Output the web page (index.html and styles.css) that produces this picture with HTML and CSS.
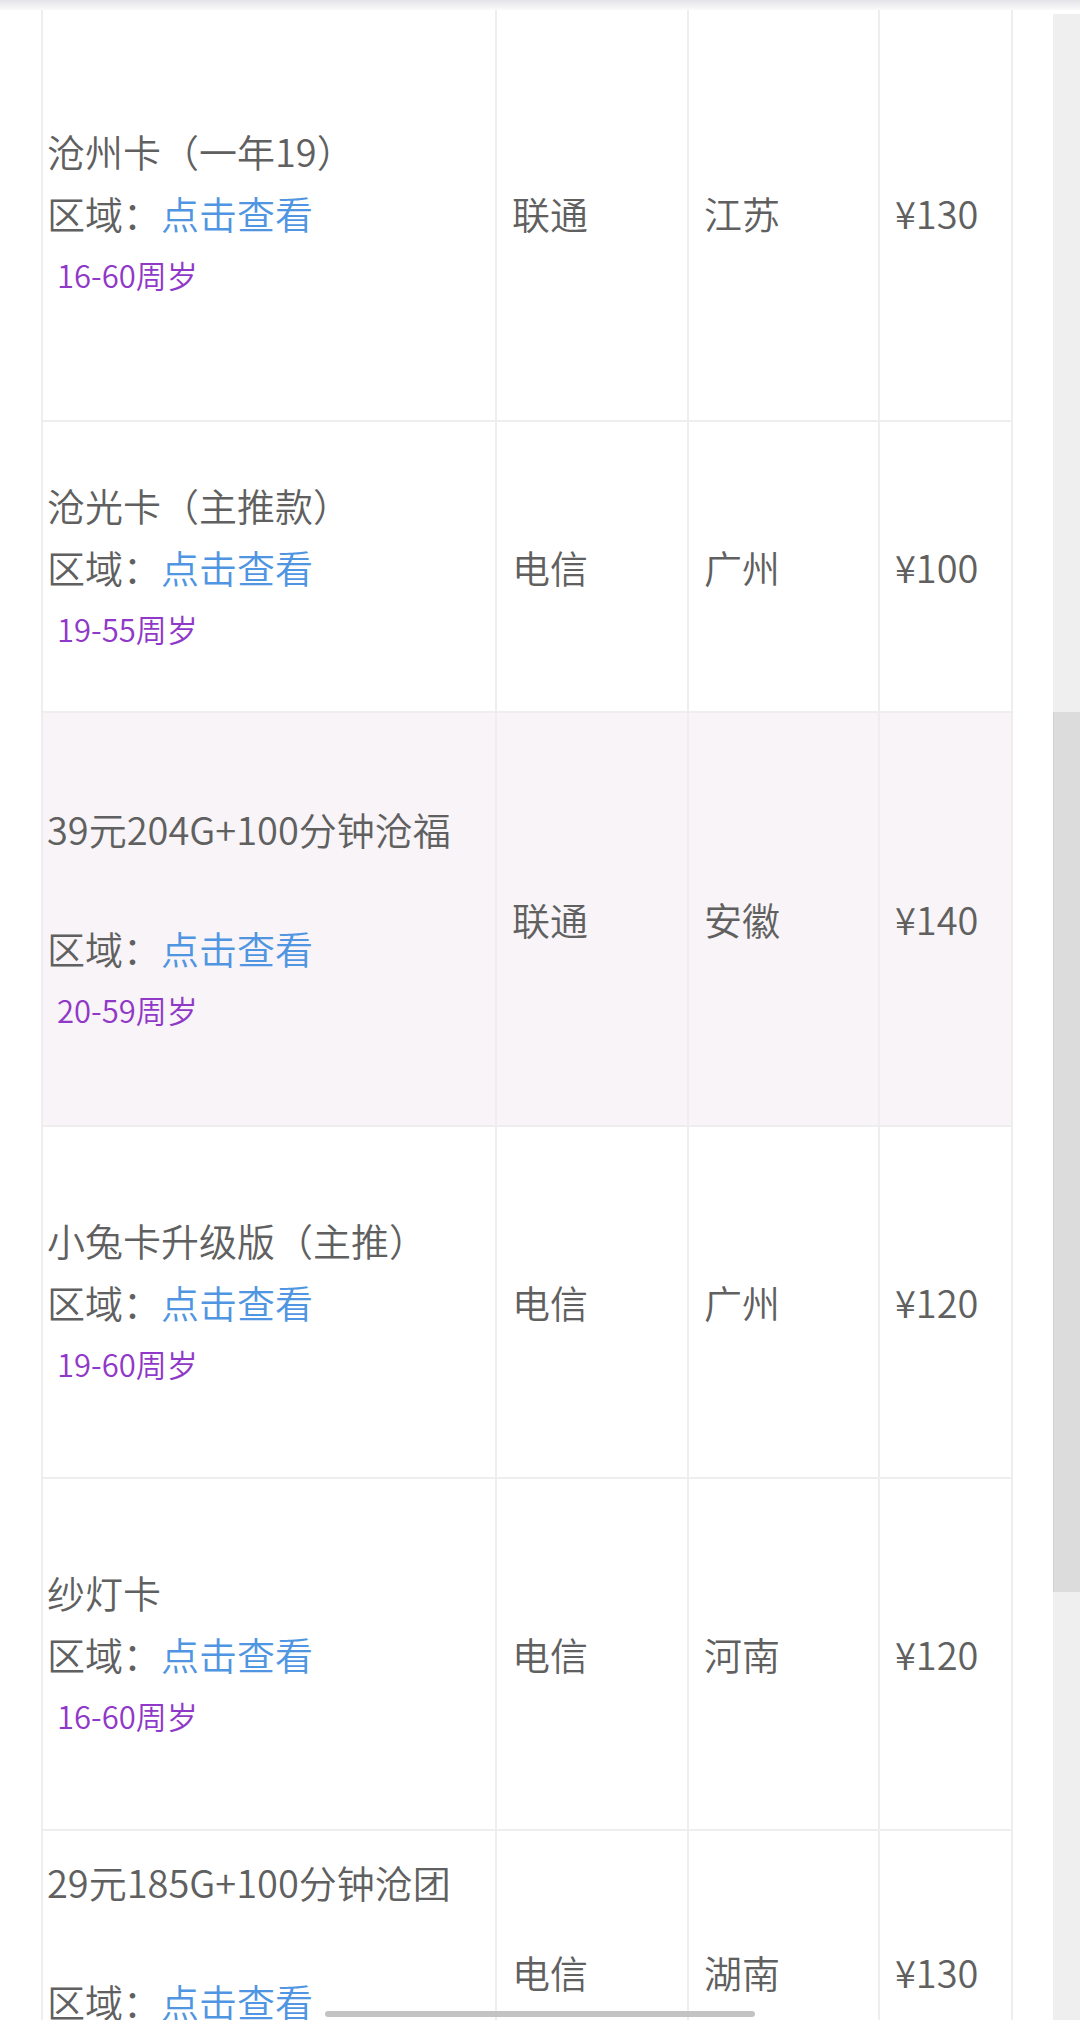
FILE: index.html
```html
<!DOCTYPE html>
<html lang="zh-CN">
<head>
<meta charset="utf-8">
<title>号卡列表</title>
<link rel="stylesheet" href="styles.css">
</head>
<body>
<div class="topbar"></div>
<div class="main">
  <div class="table">
    <div class="row r1">
      <div class="cell name">
        <div class="title">沧州卡（一年19）</div>
        <div class="area">区域：<span class="link">点击查看</span></div>
        <div class="age">16-60周岁</div>
      </div>
      <div class="cell">联通</div>
      <div class="cell">江苏</div>
      <div class="cell">¥130</div>
    </div>
    <div class="row r2">
      <div class="cell name">
        <div class="title">沧光卡（主推款）</div>
        <div class="area">区域：<span class="link">点击查看</span></div>
        <div class="age">19-55周岁</div>
      </div>
      <div class="cell">电信</div>
      <div class="cell">广州</div>
      <div class="cell">¥100</div>
    </div>
    <div class="row r3 hl">
      <div class="cell name">
        <div class="title gap">39元204G+100分钟沧福</div>
        <div class="area">区域：<span class="link">点击查看</span></div>
        <div class="age">20-59周岁</div>
      </div>
      <div class="cell">联通</div>
      <div class="cell">安徽</div>
      <div class="cell">¥140</div>
    </div>
    <div class="row r4">
      <div class="cell name">
        <div class="title">小兔卡升级版（主推）</div>
        <div class="area">区域：<span class="link">点击查看</span></div>
        <div class="age">19-60周岁</div>
      </div>
      <div class="cell">电信</div>
      <div class="cell">广州</div>
      <div class="cell">¥120</div>
    </div>
    <div class="row r5">
      <div class="cell name">
        <div class="title">纱灯卡</div>
        <div class="area">区域：<span class="link">点击查看</span></div>
        <div class="age">16-60周岁</div>
      </div>
      <div class="cell">电信</div>
      <div class="cell">河南</div>
      <div class="cell">¥120</div>
    </div>
    <div class="row r6">
      <div class="cell name">
        <div class="title gap">29元185G+100分钟沧团</div>
        <div class="area">区域：<span class="link">点击查看</span></div>
        <div class="age spacer"></div>
      </div>
      <div class="cell">电信</div>
      <div class="cell">湖南</div>
      <div class="cell">¥130</div>
    </div>
  </div>
  <div class="vscroll"><div class="thumb"></div></div>
</div>
<div class="hscroll"></div>
</body>
</html>
```
FILE: styles.css
```css
html, body {
  margin: 0;
  padding: 0;
  height: 2020px;
  overflow: hidden;
  background: #ffffff;
}
body {
  position: relative;
  font-family: "Noto Sans CJK SC", "Noto Sans", sans-serif;
  font-weight: 350;
  color: #606060;
}
.topbar {
  height: 10px;
  background: linear-gradient(to bottom, #e4e4e9, #fafafb);
}
.main {
  display: flex;
  height: 2010px;
}
.table {
  flex: none;
  margin-left: 41px;
  width: 970px;
  border-left: 2px solid #eeeeee;
  overflow: hidden;
}
.row {
  display: grid;
  grid-template-columns: 454px 192px 191px 133px;
}
.cell {
  box-sizing: border-box;
  display: flex;
  flex-direction: column;
  justify-content: center;
  padding-left: 15px;
  border-right: 2px solid #eeeeee;
  border-bottom: 2px solid #eeeeee;
  font-size: 38px;
  line-height: 62px;
  white-space: nowrap;
}
.cell.name {
  padding-left: 4px;
}
.r1 { height: 412px; }
.r1 .cell { padding-bottom: 4px; }
.r2 { height: 291px; }
.r3 { height: 414px; }
.r4 { height: 352px; }
.r5 { height: 352px; }
.r6 { height: 284px; }
.hl .cell {
  background: #f8f4f7;
}
.title.gap {
  margin-bottom: 57px;
}
.link {
  color: #4f95e2;
}
.age {
  font-size: 31px;
  color: #9038c8;
  padding-left: 10px;
}
.age.spacer {
  height: 62px;
}
.vscroll {
  flex: none;
  width: 27px;
  margin-left: auto;
  margin-top: 4px;
  background: #efefef;
}
.thumb {
  margin-top: 698px;
  height: 880px;
  background: #dcdcdc;
  border-left: 1px solid #d2d2d2;
}
.hscroll {
  position: absolute;
  left: 325px;
  top: 2011px;
  width: 430px;
  height: 6px;
  border-radius: 3px;
  background: #c3c3c3;
}
```
